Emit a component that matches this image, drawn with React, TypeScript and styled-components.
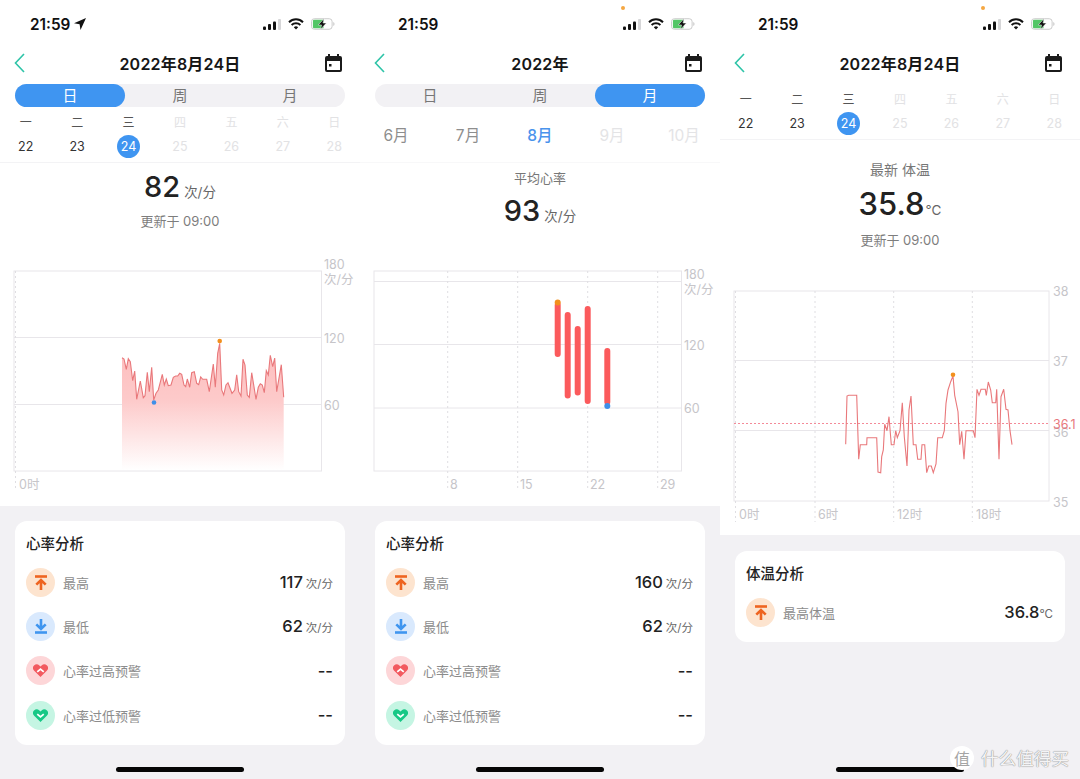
import styled, { createGlobalStyle } from 'styled-components'

const FONT = `Inter, "Noto Sans CJK SC", "Noto Sans", sans-serif`

const GlobalStyle = createGlobalStyle`
  html, body {
    margin: 0;
    padding: 0;
    background: #f2f1f4;
    font-family: ${FONT};
  }
  * {
    box-sizing: border-box;
  }
`

const Page = styled.div`
  position: relative;
  display: flex;
  width: 1080px;
  height: 779px;
  overflow: hidden;
`

const Screen = styled.div`
  display: flex;
  flex-direction: column;
  width: 360px;
  height: 779px;
  background: #f2f1f4;
`

const Top = styled.div`
  background: #fff;
`

const StatusBarRow = styled.div<{ $inset: number }>`
  position: relative;
  display: flex;
  align-items: center;
  justify-content: space-between;
  height: 48px;
  padding: 0 25px 0 ${(p) => p.$inset}px;
`

const Time = styled.div`
  display: flex;
  align-items: center;
  gap: 4px;
  font-size: 15.3px;
  font-weight: 600;
  color: #111;
`

const StatusIcons = styled.div`
  display: flex;
  align-items: center;
  gap: 7px;
`

const MicDot = styled.span`
  position: absolute;
  top: 6px;
  left: 261px;
  width: 4px;
  height: 4px;
  border-radius: 50%;
  background: #f5a742;
`

const NavBar = styled.div`
  display: grid;
  grid-template-columns: 1fr auto 1fr;
  align-items: center;
  height: 30px;
  padding: 0 18px;

  svg:first-child {
    margin-left: -4px;
  }

  svg:last-child {
    justify-self: end;
  }
`

const NavTitle = styled.div`
  font-size: 16px;
  font-weight: 600;
  color: #161616;
  letter-spacing: 0.2px;
`

const Segment = styled.div`
  display: flex;
  height: 23px;
  margin: 6px 15px 0;
  border-radius: 12px;
  background: #f2f1f4;
`

const SegmentTab = styled.div<{ $active?: boolean }>`
  display: flex;
  flex: 1;
  align-items: center;
  justify-content: center;
  padding-bottom: 2px;
  border-radius: 12px;
  font-size: 15px;
  color: ${(p) => (p.$active ? '#fff' : '#777')};
  background: ${(p) => (p.$active ? '#3f95f1' : 'transparent')};
`

const WeekGrid = styled.div<{ $top: number }>`
  display: grid;
  grid-template-columns: repeat(7, 1fr);
  padding: ${(p) => p.$top}px 0 4px;
  justify-items: center;
  border-bottom: 1px solid #f3f3f5;
`

const WeekDay = styled.div<{ $faded?: boolean }>`
  height: 22px;
  line-height: 22px;
  font-size: 12px;
  color: ${(p) => (p.$faded ? '#e2e2e4' : '#555')};
`

const DateCell = styled.div<{ $faded?: boolean; $active?: boolean }>`
  display: flex;
  align-items: center;
  justify-content: center;
  width: 23px;
  height: 23px;
  margin: 0.5px 0;
  border-radius: 50%;
  font-size: 12.5px;
  color: ${(p) => (p.$active ? '#fff' : p.$faded ? '#e2e2e4' : '#333')};
  background: ${(p) => (p.$active ? '#3f95f1' : 'transparent')};
`

const MonthRow = styled.div`
  display: grid;
  grid-template-columns: repeat(5, 1fr);
  height: 56px;
  padding: 11px 0 13px;
  justify-items: center;
  align-items: center;
  border-bottom: 1px solid #f8f8f9;
`

const Month = styled.div<{ $tone: 'past' | 'now' | 'next' }>`
  font-size: 15.5px;
  font-weight: ${(p) => (p.$tone === 'now' ? 500 : 400)};
  color: ${(p) =>
    p.$tone === 'now' ? '#4a93ec' : p.$tone === 'next' ? '#e4e4e6' : '#8e8e8e'};
`

const Summary = styled.div<{ $height: number; $pad: number }>`
  display: flex;
  flex-direction: column;
  align-items: center;
  height: ${(p) => p.$height}px;
  padding-top: ${(p) => p.$pad}px;
`

const SummaryLabel = styled.div<{ $size: number; $gap: number }>`
  height: 20px;
  line-height: 20px;
  margin-bottom: ${(p) => p.$gap}px;
  font-size: ${(p) => p.$size}px;
  color: #777;
`

const ValueLine = styled.div<{ $size: number; $gap: number }>`
  display: flex;
  align-items: baseline;
  gap: ${(p) => p.$gap}px;
  height: 40px;
  line-height: 40px;
  font-size: ${(p) => p.$size}px;
  font-weight: 500;
  color: #222;
`

const ValueUnit = styled.span`
  font-size: 13.5px;
  font-weight: 400;
  color: #666;
`

const Updated = styled.div<{ $gap: number }>`
  height: 20px;
  line-height: 20px;
  margin-top: ${(p) => p.$gap}px;
  font-size: 13px;
  color: #7d7d7d;
`

const ChartSvg = styled.svg`
  display: block;
  width: 360px;
`

const AxisText = styled.text<{ $alert?: boolean }>`
  font-family: ${FONT};
  font-size: 12.5px;
  fill: ${(p) => (p.$alert ? '#e8787c' : '#c6c5c9')};
  dominant-baseline: central;
`

const Content = styled.div<{ $top: number }>`
  display: flex;
  flex: 1;
  flex-direction: column;
  padding: ${(p) => p.$top}px 15px 7px;
`

const Card = styled.div`
  padding: 13px 11px 8px;
  border-radius: 12px;
  background: #fff;
`

const CardTitle = styled.div`
  height: 20px;
  line-height: 20px;
  margin-bottom: 6px;
  font-size: 14.5px;
  font-weight: 500;
  color: #222;
`

const Row = styled.div`
  display: flex;
  align-items: center;
  height: 44.33px;
`

const IconCircle = styled.div<{ $bg: string }>`
  display: flex;
  align-items: center;
  justify-content: center;
  flex: none;
  width: 29px;
  height: 29px;
  margin-right: 8px;
  border-radius: 50%;
  background: ${(p) => p.$bg};
`

const RowLabel = styled.div`
  flex: 1;
  font-size: 13px;
  color: #8c8c8c;
`

const RowValue = styled.div<{ $gap: number }>`
  display: flex;
  align-items: baseline;
  gap: ${(p) => p.$gap}px;
  margin-right: 1px;
  font-size: 16.5px;
  font-weight: 500;
  color: #222;
`

const RowUnit = styled.span`
  font-size: 11.5px;
  font-weight: 400;
  color: #666;
`

const HomeBar = styled.div`
  width: 128px;
  height: 5px;
  margin: auto auto 0;
  border-radius: 3px;
  background: #050505;
`

const Watermark = styled.div`
  position: absolute;
  left: 950px;
  top: 745px;
  display: flex;
  align-items: center;
  gap: 7px;
  font-size: 17.6px;
  color: #f4f4f5;
  text-shadow: 0 0 1px #8f8f8f, 0 0 1px #8f8f8f;
`

const WatermarkBadge = styled.span`
  display: flex;
  align-items: center;
  justify-content: center;
  width: 24px;
  height: 24px;
  border-radius: 50%;
  background: #fff;
  font-size: 16px;
  color: #a5a5a5;
  text-shadow: none;
`

const Signal = () => (
  <svg width="18" height="11" viewBox="0 0 18 11">
    <rect x="0" y="7.5" width="3" height="3.5" rx="1" fill="#111" />
    <rect x="5" y="5" width="3" height="6" rx="1" fill="#111" />
    <rect x="10" y="2.5" width="3" height="8.5" rx="1" fill="#111" />
    <rect x="15" y="0" width="3" height="11" rx="1" fill="#d6d6d8" />
  </svg>
)

const Wifi = () => (
  <svg width="16" height="12" viewBox="0 0 16 12">
    <path d="M1 4.2a10 10 0 0 1 14 0" fill="none" stroke="#111" strokeWidth="2" />
    <path d="M3.6 6.9a6.4 6.4 0 0 1 8.8 0" fill="none" stroke="#111" strokeWidth="2" />
    <path d="M5.8 9.2a3.2 3.2 0 0 1 4.4 0L8 11.6z" fill="#111" />
  </svg>
)

const Battery = () => (
  <svg width="24" height="12" viewBox="0 0 25 12">
    <rect x="0.5" y="0.5" width="21.5" height="11" rx="3" fill="#fff" stroke="#c9c9c9" />
    <path d="M2 3a1.5 1.5 0 0 1 1.500-1.500H13v9H3.500A1.500 1.500 0 0 1 2 9z" fill="#53c666" />
    <path d="M23.200 4v4a2 2 0 0 0 1.300-2 2 2 0 0 0-1.300-2z" fill="#c9c9c9" />
    <path d="M13.500 0.500 7.500 7h3.500l-1 4.500L16 5h-3.500z" fill="#111" stroke="#fff" strokeWidth="0.5" />
  </svg>
)

const LocationArrow = () => (
  <svg width="12" height="12" viewBox="0 0 12 12">
    <path d="M12 0 0 5.300l5.600.9.900 5.800z" fill="#111" />
  </svg>
)

const StatusBar = ({ inset, arrow, mic }: { inset: number; arrow?: boolean; mic?: boolean }) => (
  <StatusBarRow $inset={inset}>
    <Time>
      21:59
      {arrow && <LocationArrow />}
    </Time>
    {mic && <MicDot />}
    <StatusIcons>
      <Signal />
      <Wifi />
      <Battery />
    </StatusIcons>
  </StatusBarRow>
)

const BackIcon = () => (
  <svg width="11" height="20" viewBox="0 0 11 20">
    <path d="M10 1 1.500 10 10 19" fill="none" stroke="#2ec4a8" strokeWidth="1.600" />
  </svg>
)

const CalendarIcon = () => (
  <svg width="17" height="18" viewBox="0 0 17 18">
    <path d="M4 0v3M13 0v3" stroke="#1b1b1b" strokeWidth="2" />
    <rect x="1" y="3" width="15" height="14" rx="1" fill="none" stroke="#1b1b1b" strokeWidth="2" />
    <rect x="1" y="3" width="15" height="4" fill="#1b1b1b" />
    <rect x="4" y="10" width="2.500" height="2.500" fill="#1b1b1b" />
  </svg>
)

const Header = ({ title }: { title: string }) => (
  <NavBar>
    <BackIcon />
    <NavTitle>{title}</NavTitle>
    <CalendarIcon />
  </NavBar>
)

const Tabs = ({ active }: { active: string }) => (
  <Segment>
    {['日', '周', '月'].map((t) => (
      <SegmentTab key={t} $active={t === active}>
        {t}
      </SegmentTab>
    ))}
  </Segment>
)

const weekDays = ['一', '二', '三', '四', '五', '六', '日']
const dates = [22, 23, 24, 25, 26, 27, 28]

const Week = ({ top }: { top: number }) => (
  <WeekGrid $top={top}>
    {weekDays.map((d, i) => (
      <WeekDay key={d} $faded={i > 2}>
        {d}
      </WeekDay>
    ))}
    {dates.map((d, i) => (
      <DateCell key={d} $faded={i > 2} $active={i === 2}>
        {d}
      </DateCell>
    ))}
  </WeekGrid>
)

const GRID = '#e8e6ea'
const DASH = '#dfdee2'
const LINE = '#e9787b'

const UpIcon = () => (
  <svg width="14" height="15" viewBox="0 0 14 15">
    <path d="M1 1.500h12" stroke="#ee6420" strokeWidth="2.600" />
    <path d="M7 15V6M2.300 9.700 7 5l4.700 4.700" fill="none" stroke="#ee6420" strokeWidth="2.600" />
  </svg>
)

const DownIcon = () => (
  <svg width="14" height="15" viewBox="0 0 14 15">
    <path d="M1 13.500h12" stroke="#3f95ef" strokeWidth="2.600" />
    <path d="M7 0v9M2.300 5.300 7 10l4.700-4.700" fill="none" stroke="#3f95ef" strokeWidth="2.600" />
  </svg>
)

const HeartIcon = ({ color, chevron }: { color: string; chevron: string }) => (
  <svg width="15" height="13" viewBox="0 0 16 14">
    <path
      d="M8 14 1.200 7.200A4 4 0 0 1 1 1.600a4.200 4.200 0 0 1 5.800 0L8 2.800l1.200-1.200a4.200 4.200 0 0 1 5.800 0 4 4 0 0 1-.2 5.600z"
      fill={color}
    />
    <path d={chevron} fill="none" stroke="#fff" strokeWidth="1.900" />
  </svg>
)

const UP_CHEVRON = 'M4.500 8.500 8 5.500l3.500 3'
const DOWN_CHEVRON = 'M4.500 5.500 8 8.500l3.500-3'

const RowIcon = ({ kind }: { kind: 'up' | 'down' | 'high' | 'low' }) => {
  if (kind === 'up')
    return (
      <IconCircle $bg="#fde4cf">
        <UpIcon />
      </IconCircle>
    )
  if (kind === 'down')
    return (
      <IconCircle $bg="#d9e9fd">
        <DownIcon />
      </IconCircle>
    )
  if (kind === 'high')
    return (
      <IconCircle $bg="#fdd6d8">
        <HeartIcon color="#f25a60" chevron={UP_CHEVRON} />
      </IconCircle>
    )
  return (
    <IconCircle $bg="#c5f5e3">
      <HeartIcon color="#17c886" chevron={DOWN_CHEVRON} />
    </IconCircle>
  )
}

// points read off the 3x crops, so they get scaled back here
const toPoints = (raw: number[][], oy: number) =>
  raw.map(([x, y]) => `${(x / 3).toFixed(1)},${(y / 3 + oy).toFixed(1)}`).join(' ')

const dayLine = [
  [366, 323], [372, 327], [379, 358], [385, 326], [391, 335], [398, 392], [404, 363], [410, 448],
  [421, 393], [430, 443], [435, 437], [442, 367], [448, 425], [455, 352], [461, 450], [468, 430],
  [475, 420], [487, 373], [493, 405], [499, 387], [505, 407], [513, 405], [520, 382], [527, 378],
  [533, 378], [539, 370], [545, 373], [552, 405], [557, 410], [562, 387], [569, 412], [575, 368],
  [583, 365], [590, 400], [596, 404], [602, 381], [608, 388], [620, 388], [628, 425], [640, 342],
  [646, 412], [653, 310], [659, 280], [665, 420], [671, 435], [678, 405], [684, 398], [696, 430],
  [704, 420], [710, 374], [716, 425], [723, 438], [729, 328], [735, 345], [742, 435], [748, 442],
  [755, 368], [768, 448], [775, 412], [781, 401], [787, 405], [793, 428], [799, 362], [805, 375],
  [811, 316], [818, 350], [824, 324], [830, 425], [844, 344], [851, 442],
]

const tempLine = [
  [377, 523], [381, 378], [386, 376], [410, 376], [416, 568], [421, 524], [440, 524], [441, 503],
  [470, 503], [474, 606], [482, 608], [485, 560], [490, 540], [494, 463], [501, 482], [507, 440],
  [514, 524], [522, 524], [527, 482], [532, 503], [540, 482], [547, 398], [553, 500], [561, 588],
  [567, 420], [573, 378], [580, 524], [588, 524], [593, 568], [603, 568], [606, 524], [614, 524],
  [620, 608], [626, 588], [634, 588], [640, 608], [648, 582], [653, 503], [667, 503], [673, 482],
  [678, 400], [684, 360], [692, 335], [699, 318], [704, 376], [714, 425], [719, 524], [725, 484],
  [732, 568], [738, 482], [760, 482], [765, 503], [771, 358], [777, 376], [783, 358], [796, 358],
  [799, 376], [805, 336], [812, 360], [817, 398], [827, 398], [830, 358], [837, 568], [843, 380],
  [851, 358], [858, 418], [864, 420], [870, 482], [876, 524],
]

const VDash = ({ x, y1, y2 }: { x: number; y1: number; y2: number }) => (
  <line x1={x} x2={x} y1={y1} y2={y2} stroke={DASH} strokeWidth="1" strokeDasharray="2 3" />
)

const DayChart = () => (
  <ChartSvg height="251" viewBox="0 255 360 251">
    <defs>
      <linearGradient id="dayFill" x1="0" y1="0" x2="0" y2="1">
        <stop offset="0" stopColor="#fdbcbc" />
        <stop offset="0.45" stopColor="#fdcaca" />
        <stop offset="1" stopColor="#ffffff" />
      </linearGradient>
    </defs>
    <rect x="14" y="271" width="307.500" height="200" fill="none" stroke={GRID} />
    <line x1="14" x2="321" y1="337.500" y2="337.500" stroke={GRID} />
    <line x1="14" x2="321" y1="404.500" y2="404.500" stroke={GRID} />
    <VDash x={15.500} y1={271} y2={490} />
    <polygon points={`122,470 ${toPoints(dayLine, 250)} 283.700,470`} fill="url(#dayFill)" />
    <polyline points={toPoints(dayLine, 250)} fill="none" stroke={LINE} strokeWidth="1.100" />
    <circle cx="219.700" cy="341" r="2.300" fill="#f2901d" />
    <circle cx="154" cy="402.500" r="2.300" fill="#3f8fe8" />
    <AxisText x="324" y="264">180</AxisText>
    <AxisText x="324" y="279">次/分</AxisText>
    <AxisText x="324" y="338">120</AxisText>
    <AxisText x="324" y="405">60</AxisText>
    <AxisText x="19" y="484">0时</AxisText>
  </ChartSvg>
)

const monthBars = [
  { x: 197.700, y1: 305, y2: 354 },
  { x: 207.700, y1: 315, y2: 395.500 },
  { x: 217.700, y1: 329, y2: 392.500 },
  { x: 227.700, y1: 309, y2: 401 },
  { x: 247.300, y1: 351, y2: 402 },
]

const MonthChart = () => (
  <ChartSvg height="251" viewBox="0 255 360 251">
    <rect x="14" y="271" width="307.500" height="200" fill="none" stroke={GRID} />
    <line x1="14" x2="321" y1="281.500" y2="281.500" stroke={GRID} />
    <line x1="14" x2="321" y1="344.500" y2="344.500" stroke={GRID} />
    <line x1="14" x2="321" y1="408" y2="408" stroke={GRID} />
    {[87.700, 157.700, 227.700, 297.700].map((x) => (
      <VDash key={x} x={x} y1={271} y2={490} />
    ))}
    {monthBars.map((b) => (
      <line
        key={b.x}
        x1={b.x}
        x2={b.x}
        y1={b.y1}
        y2={b.y2}
        stroke="#fb5a5c"
        strokeWidth="6"
        strokeLinecap="round"
      />
    ))}
    <circle cx="197.700" cy="302.500" r="3" fill="#f2901d" />
    <circle cx="247.300" cy="406" r="3" fill="#3f8fe8" />
    <AxisText x="324" y="274">180</AxisText>
    <AxisText x="324" y="289">次/分</AxisText>
    <AxisText x="324" y="345">120</AxisText>
    <AxisText x="324" y="408">60</AxisText>
    <AxisText x="90" y="484">8</AxisText>
    <AxisText x="160" y="484">15</AxisText>
    <AxisText x="230" y="484">22</AxisText>
    <AxisText x="300" y="484">29</AxisText>
  </ChartSvg>
)

const TempChart = () => (
  <ChartSvg height="255" viewBox="0 280 360 255">
    <rect x="14" y="291" width="315" height="210" fill="none" stroke={GRID} />
    <line x1="14" x2="329" y1="360.500" y2="360.500" stroke={GRID} />
    <line x1="14" x2="329" y1="430.500" y2="430.500" stroke={GRID} />
    <line x1="14" x2="329" y1="423.500" y2="423.500" stroke="#f48a98" strokeDasharray="2 2" />
    {[15.500, 95, 173.700, 252.300].map((x) => (
      <VDash key={x} x={x} y1={291} y2={522} />
    ))}
    <polyline points={toPoints(tempLine, 270)} fill="none" stroke={LINE} strokeWidth="1.100" />
    <circle cx="233" cy="374.700" r="2.300" fill="#f2901d" />
    <AxisText x="333" y="291">38</AxisText>
    <AxisText x="333" y="361">37</AxisText>
    <AxisText x="333" y="432">36</AxisText>
    <AxisText x="333" y="424" $alert>36.1</AxisText>
    <AxisText x="333" y="502">35</AxisText>
    <AxisText x="19" y="514">0时</AxisText>
    <AxisText x="98" y="514">6时</AxisText>
    <AxisText x="177" y="514">12时</AxisText>
    <AxisText x="256" y="514">18时</AxisText>
  </ChartSvg>
)

const HeartCard = ({ high }: { high: number }) => (
  <Card>
    <CardTitle>心率分析</CardTitle>
    <Row>
      <RowIcon kind="up" />
      <RowLabel>最高</RowLabel>
      <RowValue $gap={3}>
        {high}
        <RowUnit>次/分</RowUnit>
      </RowValue>
    </Row>
    <Row>
      <RowIcon kind="down" />
      <RowLabel>最低</RowLabel>
      <RowValue $gap={3}>
        62
        <RowUnit>次/分</RowUnit>
      </RowValue>
    </Row>
    <Row>
      <RowIcon kind="high" />
      <RowLabel>心率过高预警</RowLabel>
      <RowValue $gap={3}>--</RowValue>
    </Row>
    <Row>
      <RowIcon kind="low" />
      <RowLabel>心率过低预警</RowLabel>
      <RowValue $gap={3}>--</RowValue>
    </Row>
  </Card>
)

const App = () => {
  return (
    <Page>
      <GlobalStyle />
      <Screen>
        <Top>
          <StatusBar inset={30} arrow />
          <Header title="2022年8月24日" />
          <Tabs active="日" />
          <Week top={5} />
          <Summary $height={92} $pad={4}>
            <ValueLine $size={29} $gap={4}>
              82
              <ValueUnit>次/分</ValueUnit>
            </ValueLine>
            <Updated $gap={4}>更新于 09:00</Updated>
          </Summary>
          <DayChart />
        </Top>
        <Content $top={15}>
          <HeartCard high={117} />
          <HomeBar />
        </Content>
      </Screen>

      <Screen>
        <Top>
          <StatusBar inset={38} mic />
          <Header title="2022年" />
          <Tabs active="月" />
          <MonthRow>
            <Month $tone="past">6月</Month>
            <Month $tone="past">7月</Month>
            <Month $tone="now">8月</Month>
            <Month $tone="next">9月</Month>
            <Month $tone="next">10月</Month>
          </MonthRow>
          <Summary $height={92} $pad={5}>
            <SummaryLabel $size={13} $gap={3}>平均心率</SummaryLabel>
            <ValueLine $size={29} $gap={4}>
              93
              <ValueUnit>次/分</ValueUnit>
            </ValueLine>
          </Summary>
          <MonthChart />
        </Top>
        <Content $top={15}>
          <HeartCard high={160} />
          <HomeBar />
        </Content>
      </Screen>

      <Screen>
        <Top>
          <StatusBar inset={38} mic />
          <Header title="2022年8月24日" />
          <Week top={11} />
          <Summary $height={140} $pad={20}>
            <SummaryLabel $size={14} $gap={4}>最新 体温</SummaryLabel>
            <ValueLine $size={31} $gap={1}>
              35.8
              <ValueUnit>°C</ValueUnit>
            </ValueLine>
            <Updated $gap={6}>更新于 09:00</Updated>
          </Summary>
          <TempChart />
        </Top>
        <Content $top={16}>
          <Card>
            <CardTitle>体温分析</CardTitle>
            <Row>
              <RowIcon kind="up" />
              <RowLabel>最高体温</RowLabel>
              <RowValue $gap={0}>
                36.8
                <RowUnit>°C</RowUnit>
              </RowValue>
            </Row>
          </Card>
          <HomeBar />
        </Content>
      </Screen>

      <Watermark>
        <WatermarkBadge>值</WatermarkBadge>
        什么值得买
      </Watermark>
    </Page>
  )
}

export default App
